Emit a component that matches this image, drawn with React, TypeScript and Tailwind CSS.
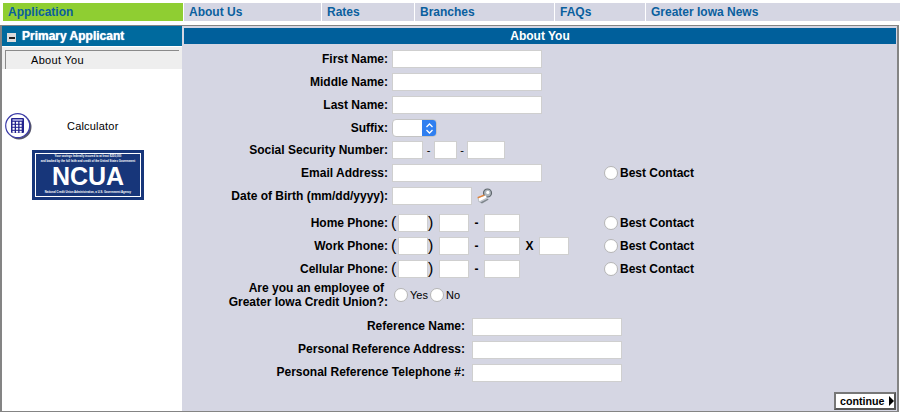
const F = "font-['Liberation_Sans',Arial,sans-serif]";

function Box({ w }: { w: string }) {
  return <div className={`${w} h-[18px] shrink-0 bg-white border border-[#cfcfcf]`} />;
}

function Radio() {
  return <span className="inline-block w-[14px] h-[14px] shrink-0 rounded-full bg-white border border-[#b5b5b5]" />;
}

function Row({ label, mt, children }: { label: string; mt: string; children?: React.ReactNode }) {
  return (
    <div className={`flex items-center h-[18px] ${mt}`}>
      <div className="w-[206px] shrink-0 text-right text-[12px] font-bold text-black whitespace-nowrap">{label}</div>
      <div className="ml-[4px] flex items-center">{children}</div>
    </div>
  );
}

function Best({ ml }: { ml: string }) {
  return (
    <div className={`flex items-center gap-[2px] ${ml}`}>
      <Radio />
      <span className="text-[12px] font-bold text-black whitespace-nowrap">Best Contact</span>
    </div>
  );
}

function Phone({ ext }: { ext?: boolean }) {
  return (
    <>
      <span className="text-[16px] font-normal leading-none w-[7px] -ml-[1px]">(</span>
      <Box w="w-[30px]" />
      <span className="text-[16px] font-normal leading-none w-[11px]">)</span>
      <Box w="w-[30px]" />
      <span className="w-[15px] text-center text-[12px] font-bold">-</span>
      <Box w="w-[36px]" />
      {ext && (
        <>
          <span className="w-[19px] text-center text-[12px] font-bold">X</span>
          <Box w="w-[30px]" />
        </>
      )}
    </>
  );
}

function RefRow({ label, mt }: { label: string; mt: string }) {
  return (
    <div className={`flex items-center h-[18px] ${mt}`}>
      <div className="w-[283px] shrink-0 pb-[2px] text-right text-[12px] font-bold leading-[16px] text-black whitespace-nowrap">{label}</div>
      <div className="ml-[7px]">
        <Box w="w-[150px]" />
      </div>
    </div>
  );
}

function CalcIcon() {
  return (
    <svg width="27" height="27" viewBox="0 0 27 27" className="shrink-0">
      <circle cx="14" cy="14" r="12.5" fill="#55556a" />
      <circle cx="12.7" cy="12.7" r="12" fill="#fff" stroke="#3c3ca8" strokeWidth="1.2" />
      <rect x="6" y="5" width="13" height="15" rx="1" fill="#23238e" />
      <rect x="7.5" y="6" width="10" height="2" fill="#9a9ad8" />
      {[9, 12, 15, 18].flatMap((y) =>
        [7.5, 11, 14.5].map((x) => <rect key={`${x}-${y}`} x={x} y={y - 0.2} width="2.2" height="2" fill="#fff" />)
      )}
    </svg>
  );
}

function KeyIcon() {
  return (
    <svg width="16" height="16" viewBox="0 0 16 16" className="ml-[5px] shrink-0">
      <circle cx="10.5" cy="5" r="4" fill="#aeb6bc" stroke="#5f676d" strokeWidth="1.2" />
      <circle cx="10.8" cy="4.4" r="1.6" fill="#fff" />
      <path d="M1 9.5 L9 7 L10 10 L2 14 Z" fill="#fff" stroke="#9aa2a8" strokeWidth="0.6" />
      <path d="M0.5 9 L7 6.5 L7.6 7.8 L1 10.5 Z" fill="#e2833a" />
      <path d="M3 14.5 L11 10.5 L11.5 11.8 L5 15.5 Z" fill="#7f878d" />
    </svg>
  );
}

export default function App() {
  return (
    <div className={`${F} w-[900px] h-[412px] bg-white overflow-hidden flex flex-col pt-[3px]`}>
      <nav className="flex h-[18px] pl-[3px] text-[12px] font-bold leading-[18px] text-[#0a5f9e] gap-[1px] shrink-0">
        <div className="w-[180px] bg-[#8fce32] pl-[5px]">Application</div>
        <div className="w-[137px] bg-[#d5d6e3] pl-[5px]">About Us</div>
        <div className="w-[92px] bg-[#d5d6e3] pl-[5px]">Rates</div>
        <div className="w-[139px] bg-[#d5d6e3] pl-[5px]">Branches</div>
        <div className="w-[90px] bg-[#d5d6e3] pl-[5px]">FAQs</div>
        <div className="flex-1 bg-[#d5d6e3] pl-[5px]">Greater Iowa News</div>
      </nav>
      <div className="mt-[4px] w-[899px] flex-1 flex border-x-2 border-y border-[#848484] min-h-0">
        <aside className="w-[180px] shrink-0 bg-white">
          <div className="h-[20px] bg-[#006a9e] flex items-center text-white text-[12px] font-bold [text-shadow:0_0_1px_#ffffff]">
            <span className="ml-[5px] w-[9px] h-[9px] bg-[#dcdcdc] flex items-center justify-center mt-[3px]">
              <span className="w-[6px] h-[2px] bg-[#222]" />
            </span>
            <span className="ml-[6px]">Primary Applicant</span>
          </div>
          <div className="mt-[1px] h-[22px] bg-[#eeeeee] pt-[3px] pl-[3px] pr-[3px]">
            <div className="h-[19px] border-t border-l border-[#8a8a8a] pl-[25px] text-[11px] leading-[18px] text-black tracking-[0.3px]">
              About You
            </div>
          </div>
          <div className="mt-[44px] ml-[3px] flex items-center">
            <CalcIcon />
            <span className="ml-[35px] text-[11px] text-black tracking-[0.2px]">Calculator</span>
          </div>
          <div className="mt-[10px] ml-[30px] w-[112px] h-[50px] bg-[#17367a] p-[3px]">
            <div className="h-full border border-white flex flex-col items-center text-white">
              <span className="text-[2.8px] leading-[4px] font-bold whitespace-nowrap">Your savings federally insured to at least $250,000</span>
              <span className="text-[2.8px] leading-[4px] mt-[1px] font-bold whitespace-nowrap">and backed by the full faith and credit of the United States Government</span>
              <span className="text-[25px] leading-[24px] mt-[1px] font-bold">NCUA</span>
              <span className="text-[2.8px] leading-[4px] mt-[2px] font-bold whitespace-nowrap">National Credit Union Administration, a U.S. Government Agency</span>
            </div>
          </div>
        </aside>
        <main className="flex-1 bg-[#d5d6e3] text-black relative">
          <div className="mt-[2px] ml-[2px] mr-[1px] h-[16px] bg-[#005f9b] text-white text-[12px] font-bold leading-[16px] text-center">
            About You
          </div>
          <Row label="First Name:" mt="mt-[6px]"><Box w="w-[150px]" /></Row>
          <Row label="Middle Name:" mt="mt-[5px]"><Box w="w-[150px]" /></Row>
          <Row label="Last Name:" mt="mt-[5px]"><Box w="w-[150px]" /></Row>
          <Row label="Suffix:" mt="mt-[5px]">
            <div className="w-[45px] h-[18px] rounded-[4px] bg-white border border-[#c4c4c4] flex justify-end overflow-hidden">
              <div className="w-[15px] -my-[1px] -mr-[1px] bg-[#2f7ff0] flex items-center justify-center">
                <svg width="9" height="13" viewBox="0 0 9 13" fill="none" stroke="#fff" strokeWidth="1.3">
                  <path d="M1.5 5 L4.5 2 L7.5 5" />
                  <path d="M1.5 8 L4.5 11 L7.5 8" />
                </svg>
              </div>
            </div>
          </Row>
          <Row label="Social Security Number:" mt="mt-[4px]">
            <Box w="w-[31px]" />
            <span className="w-[11px] text-center text-[11px]">-</span>
            <Box w="w-[23px]" />
            <span className="w-[10px] text-center text-[11px]">-</span>
            <Box w="w-[38px]" />
          </Row>
          <Row label="Email Address:" mt="mt-[5px]">
            <Box w="w-[150px]" />
            <Best ml="ml-[62px]" />
          </Row>
          <Row label="Date of Birth (mm/dd/yyyy):" mt="mt-[5px]">
            <Box w="w-[80px]" />
            <KeyIcon />
          </Row>
          <Row label="Home Phone:" mt="mt-[9px]">
            <Phone />
            <Best ml="ml-[84px]" />
          </Row>
          <Row label="Work Phone:" mt="mt-[5px]">
            <Phone ext />
            <Best ml="ml-[35px]" />
          </Row>
          <Row label="Cellular Phone:" mt="mt-[5px]">
            <Phone />
            <Best ml="ml-[84px]" />
          </Row>
          <div className="flex items-center mt-[3px] h-[28px]">
            <div className="w-[206px] shrink-0 text-right text-[12px] font-bold leading-[14px] whitespace-nowrap">
              <span className="pr-[4px]">Are you an employee of</span><br />Greater Iowa Credit Union?:
            </div>
            <div className="ml-[6px] flex items-center text-[11px] gap-[2px]">
              <Radio />
              <span>Yes</span>
              <Radio />
              <span>No</span>
            </div>
          </div>
          <RefRow label="Reference Name:" mt="mt-[9px]" />
          <RefRow label="Personal Reference Address:" mt="mt-[5px]" />
          <RefRow label="Personal Reference Telephone #:" mt="mt-[5px]" />
          <button className="absolute right-[1px] bottom-[1px] w-[62px] h-[18px] bg-white border-2 border-t-[#777] border-l-[#777] border-r-[#555] border-b-[#555] flex items-center justify-start pl-[4px] gap-[4px] text-[10.7px] font-bold text-black">
            continue
            <svg width="5" height="10" viewBox="0 0 5 10" className="shrink-0"><path d="M0 0 L5 5 L0 10 Z" fill="#000" /></svg>
          </button>
        </main>
      </div>
    </div>
  );
}
